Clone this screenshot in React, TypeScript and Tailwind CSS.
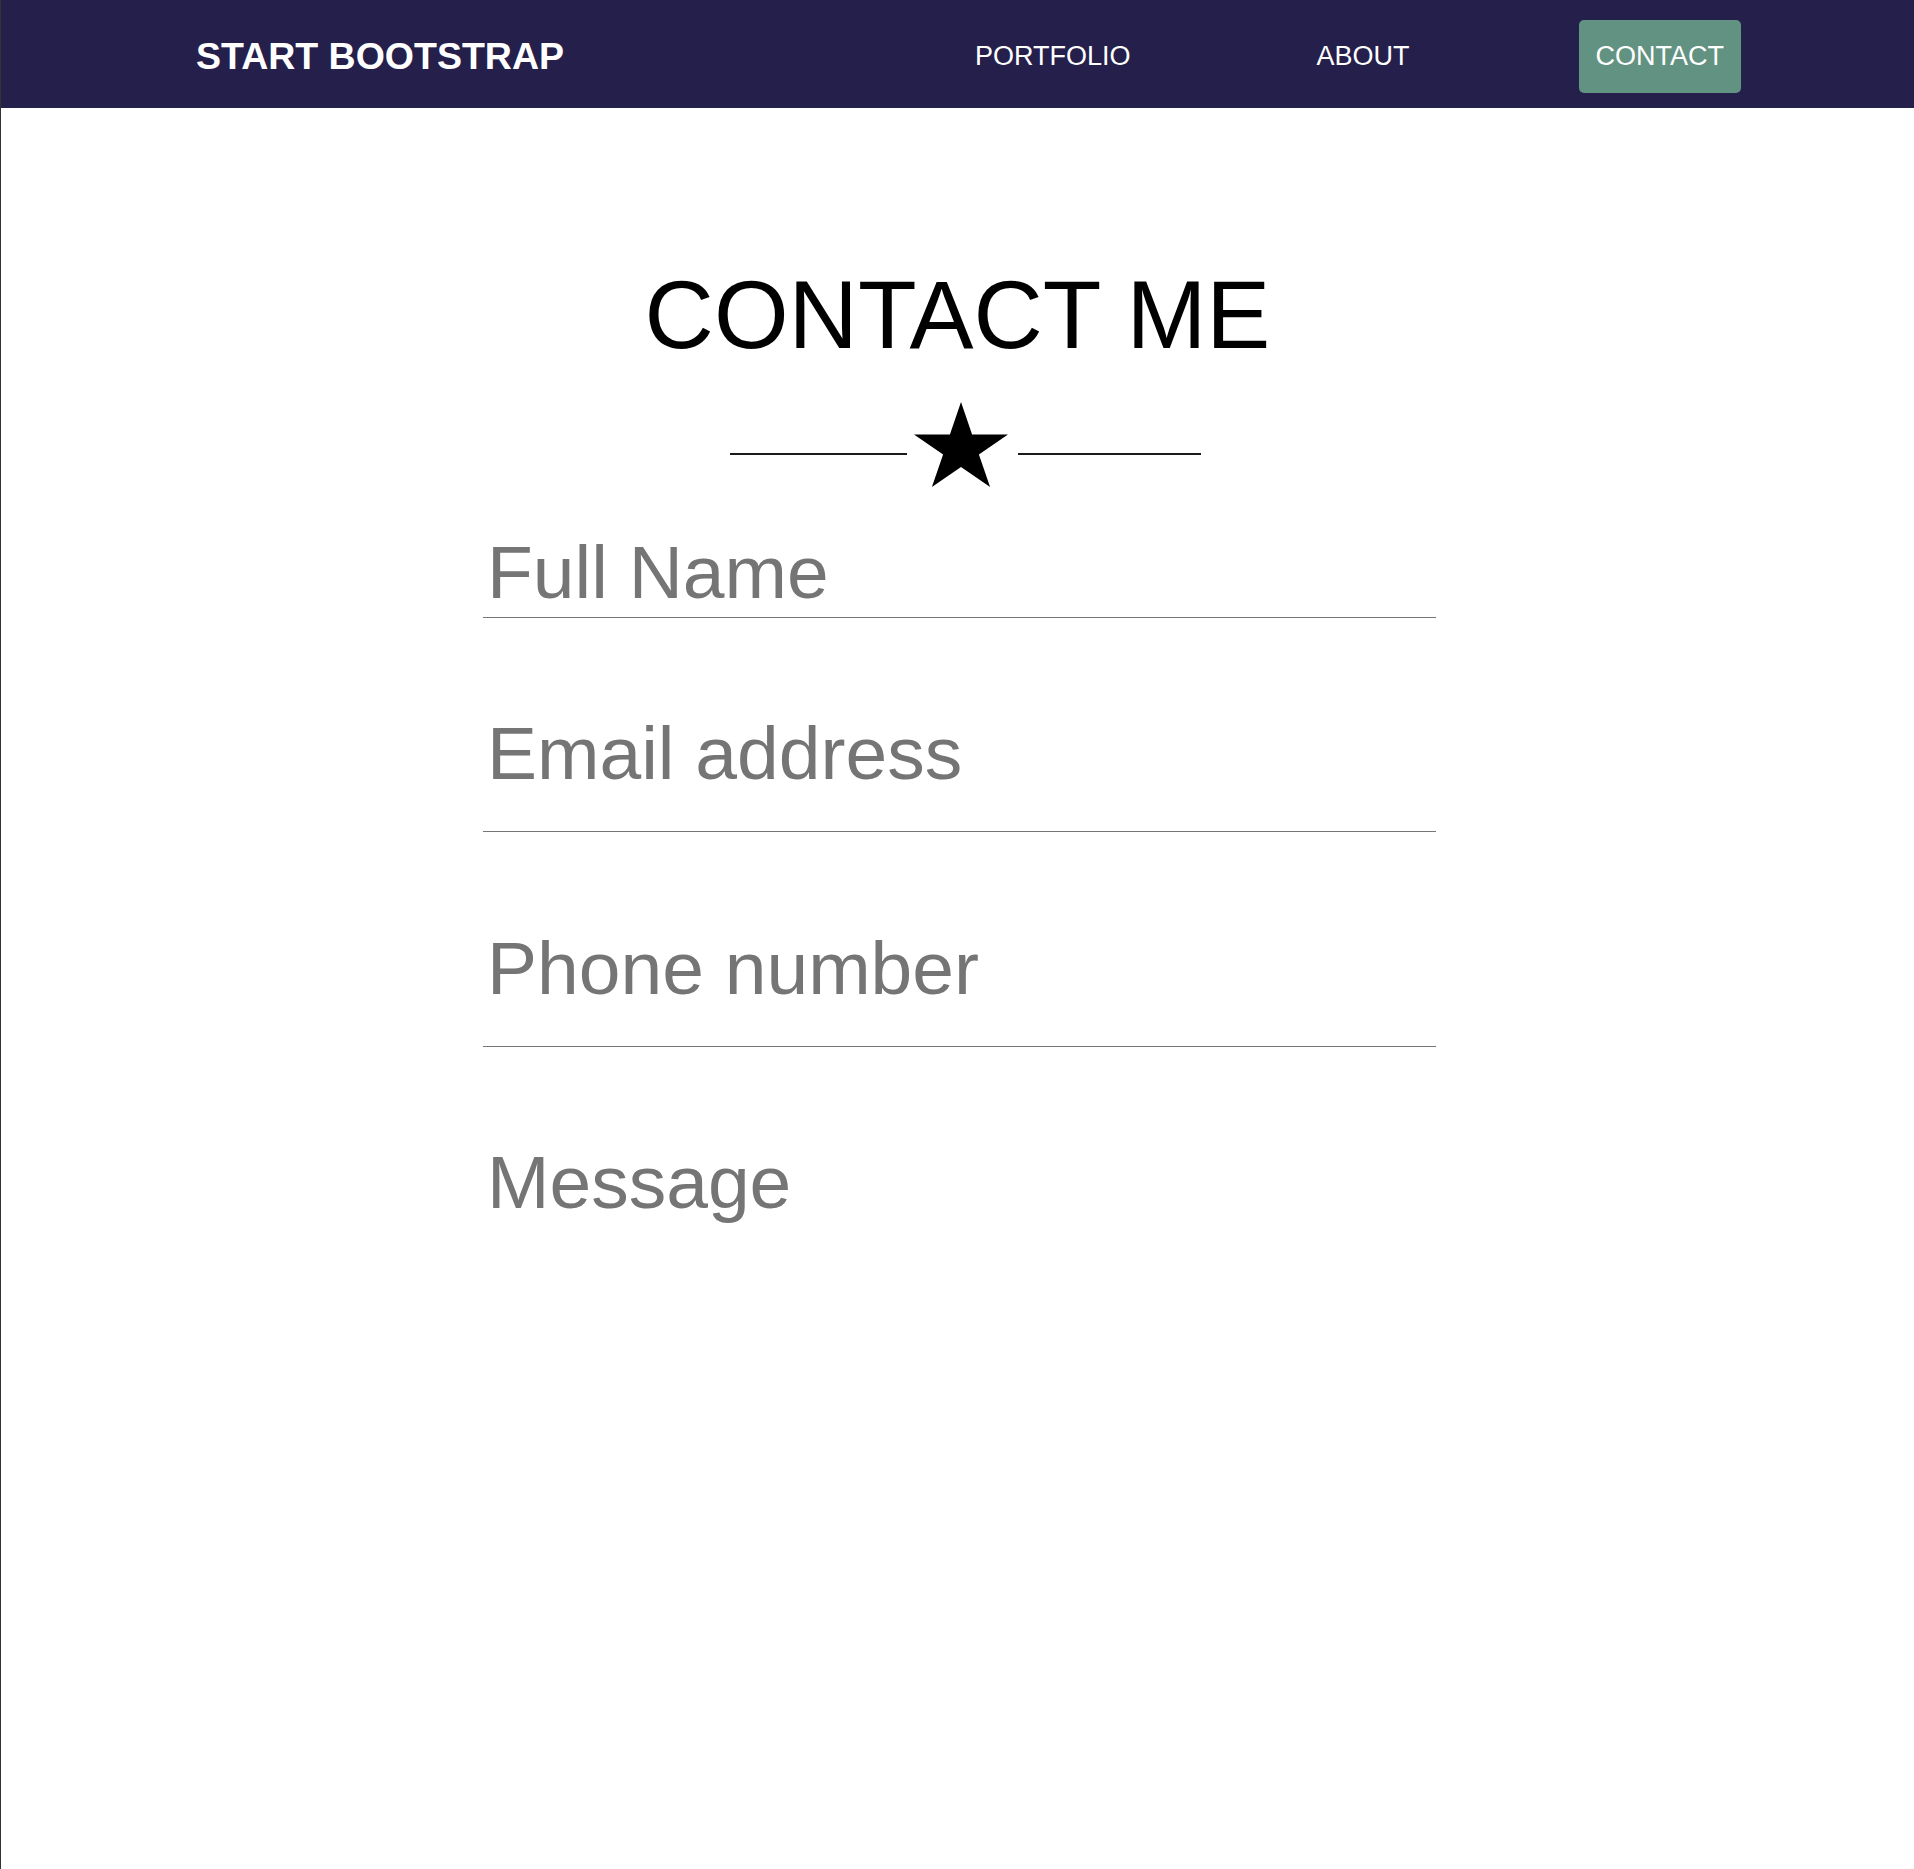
import React from "react";

function Star() {
  return (
    <svg width="94" height="85" viewBox="0 0 94 85" className="block shrink-0">
      <polygon
        fill="#000"
        points="47,0 58.1,32.5 94,32.5 64.9,52.5 76.1,85 47,64.9 17.9,85 29.1,52.5 0,32.5 35.9,32.5"
      />
    </svg>
  );
}

export default function App() {
  return (
    <div className="min-h-screen bg-white border-l border-[#333333] font-['Liberation_Sans',Arial,sans-serif]">
      <nav className="h-[108px] bg-[#251f4c] flex items-center justify-between pl-[195px] pr-[173px] pt-[4px]">
        <a className="text-white font-bold text-[37.5px] leading-normal">START BOOTSTRAP</a>
        <div className="flex items-center gap-[152px]">
          <a className="h-[73px] px-[17px] flex items-center text-white text-[27px] leading-normal">PORTFOLIO</a>
          <a className="h-[73px] px-[17px] flex items-center text-white text-[27px] leading-normal">ABOUT</a>
          <a className="h-[73px] px-[17px] flex items-center text-white text-[27px] leading-normal bg-[#629281] rounded-[5px]">
            CONTACT
          </a>
        </div>
      </nav>

      <section className="flex flex-col items-center">
        <h1 className="mt-[159px] text-[96px] leading-none text-black font-normal">CONTACT ME</h1>

        <div className="mt-[39px] flex items-start pl-[15px]">
          <div className="mt-[51px] w-[177px] h-[2px] bg-[#1a1a1a]" />
          <div className="ml-[7px]">
            <Star />
          </div>
          <div className="ml-[10px] mt-[51px] w-[183px] h-[2px] bg-[#1a1a1a]" />
        </div>

        <form className="mt-[44px] w-[953px] ml-[4px] flex flex-col">
          <div className="pb-[4px] border-b border-[#767676]">
            <input
              type="text"
              placeholder="Full Name"
              className="block w-full h-[82px] pl-[4px] text-[75px] text-[#222] placeholder:text-[#757575] outline-none"
            />
          </div>
          <div className="mt-[94px] pb-[37px] border-b border-[#767676]">
            <input
              type="email"
              placeholder="Email address"
              className="block w-full h-[82px] pl-[4px] text-[75px] text-[#222] placeholder:text-[#757575] outline-none"
            />
          </div>
          <div className="mt-[95px] pb-[37px] border-b border-[#767676]">
            <input
              type="tel"
              placeholder="Phone number"
              className="block w-full h-[82px] pl-[4px] text-[75px] text-[#222] placeholder:text-[#757575] outline-none"
            />
          </div>
          <div className="mt-[92px]">
            <textarea
              placeholder="Message"
              className="block w-full h-[300px] pl-[4px] resize-none text-[75px] leading-[86px] text-[#222] placeholder:text-[#757575] outline-none"
            />
          </div>
        </form>
      </section>
    </div>
  );
}
